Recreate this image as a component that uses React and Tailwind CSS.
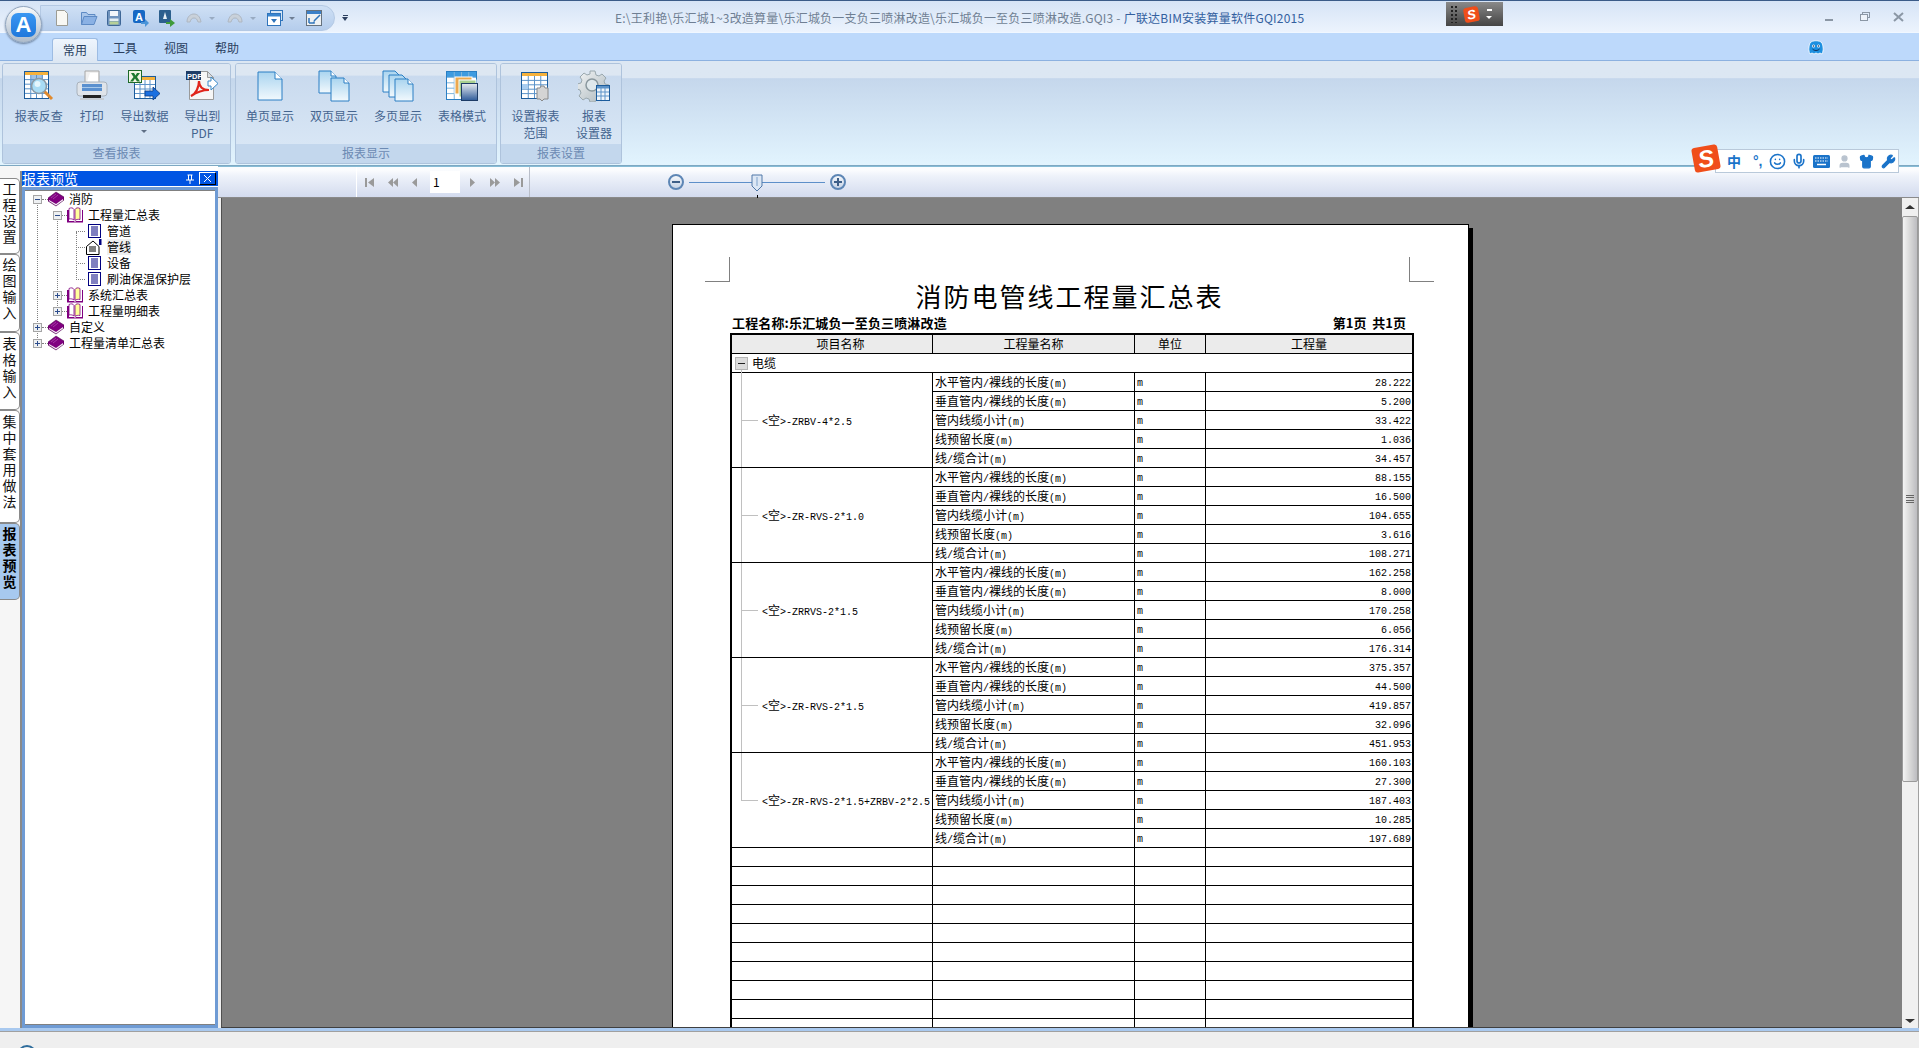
import React from "react";
import { Smile, Mic, Shirt, Wrench, User } from "lucide-react";

const reportGroups = [
  { name: "ZRBV-4*2.5", vals: ["28.222", "5.200", "33.422", "1.036", "34.457"] },
  { name: "ZR-RVS-2*1.0", vals: ["88.155", "16.500", "104.655", "3.616", "108.271"] },
  { name: "ZRRVS-2*1.5", vals: ["162.258", "8.000", "170.258", "6.056", "176.314"] },
  { name: "ZR-RVS-2*1.5", vals: ["375.357", "44.500", "419.857", "32.096", "451.953"] },
  { name: "ZR-RVS-2*1.5+ZRBV-2*2.5", vals: ["160.103", "27.300", "187.403", "10.285", "197.689"] },
];

const rowNames = ["水平管内/裸线的长度(m)", "垂直管内/裸线的长度(m)", "管内线缆小计(m)", "线预留长度(m)", "线/缆合计(m)"];

// CJK is 12px, latin is the 6px wide mono of the report
const Mixed = ({ text, className = "" }) => (
  <div className={`h-[18px] flex items-baseline whitespace-pre overflow-hidden ${className}`}>
    {text.split(/([\u4e00-\u9fff]+)/).filter(Boolean).map((part, i) =>
      /[\u4e00-\u9fff]/.test(part) ? (
        <span key={i} className="text-[12px] leading-[18px] [font-family:'Noto_Sans_CJK_SC',sans-serif]">{part}</span>
      ) : (
        <span key={i} className="text-[10px] leading-[22px] [font-family:'Liberation_Mono',monospace]">{part}</span>
      )
    )}
  </div>
);

const Defs = () => (
  <svg className="absolute w-0 h-0">
    <defs>
      <linearGradient id="sheet" x1="0" y1="0" x2="0" y2="1">
        <stop offset="0" stopColor="#a9d4ef" />
        <stop offset="1" stopColor="#f2f9fd" />
      </linearGradient>
      <linearGradient id="steel" x1="0" y1="0" x2="0" y2="1">
        <stop offset="0" stopColor="#e8ecf0" />
        <stop offset="1" stopColor="#2f5c9a" />
      </linearGradient>
      <linearGradient id="gearFill" x1="0" y1="0" x2="1" y2="1">
        <stop offset="0" stopColor="#f3f5f6" />
        <stop offset="1" stopColor="#a9b5ba" />
      </linearGradient>
    </defs>
  </svg>
);

const Sheet = ({ x, y, w, h, fold = 7 }) => (
  <path
    d={`M${x} ${y}h${w - fold}l${fold} ${fold}v${h - fold}h-${w}z`}
    fill="url(#sheet)"
    stroke="#2a7fc4"
    strokeWidth="1"
  />
);

const Grid = ({ x, y, w, h, cols, rows, stroke = "#5c93c9" }) => (
  <g stroke={stroke} strokeWidth="1">
    {[...Array(cols - 1)].map((_, i) => (
      <line key={i} x1={x + ((i + 1) * w) / cols} y1={y} x2={x + ((i + 1) * w) / cols} y2={y + h} />
    ))}
    {[...Array(rows - 1)].map((_, i) => (
      <line key={i} x1={x} y1={y + ((i + 1) * h) / rows} x2={x + w} y2={y + ((i + 1) * h) / rows} />
    ))}
  </g>
);

const IconReportCheck = () => (
  <svg width="32" height="32" viewBox="0 0 32 32">
    <rect x="1.500" y="1.500" width="24" height="27" fill="#fff" stroke="#1c5c9c" />
    <rect x="2" y="2" width="23" height="3" fill="#f5b13c" />
    <rect x="8" y="5" width="12" height="15" fill="#9fc1e3" />
    <Grid x={2} y={5} w={23} h={23} cols={4} rows={5} />
    <line x1="21" y1="21" x2="29" y2="29" stroke="#e08a2e" strokeWidth="3" />
    <circle cx="16" cy="16" r="7.500" fill="#a9dcf5" stroke="#8a9aa6" strokeWidth="1.600" />
    <circle cx="14.500" cy="14" r="3" fill="#e4f6fd" />
  </svg>
);

const IconPrinter = () => (
  <svg width="32" height="32" viewBox="0 0 32 32">
    <path d="M9 1h14v12H9z" fill="#f0f0f0" stroke="#a6a6a6" />
    <path d="M14 3h8v9h-11z" fill="#fff" />
    <rect x="1" y="12" width="30" height="14" rx="3" fill="#dfe4ea" stroke="#a9b2bc" />
    <rect x="6" y="14" width="20" height="7" fill="#5a90cf" />
    <rect x="6" y="17" width="20" height="1" fill="#a8c9ea" />
    <rect x="7" y="25" width="18" height="3" fill="#222" />
    <rect x="4" y="28" width="24" height="2" fill="#c6ccd3" />
  </svg>
);

const IconExcel = () => (
  <svg width="32" height="32" viewBox="0 0 32 32">
    <rect x="6.500" y="6.500" width="21" height="22" fill="#fff" stroke="#1c5c9c" />
    <rect x="7" y="7" width="20" height="3" fill="#f5b13c" />
    <Grid x={7} y={10} w={20} h={18} cols={4} rows={4} />
    <rect x="0.500" y="0.500" width="13" height="12" fill="#f2f6e4" stroke="#1e6a2a" />
    <path d="M3 3h3l1.500 2.500L9 3h3l-3 4 3 4.500H9L7 8.500 5 11.500H2L5.500 7z" fill="#1e7a30" />
    <path d="M17 21h8v-4l7 6.500-7 6.500v-4h-8z" fill="#1a6fe0" stroke="#0c3a80" strokeWidth="0.800" />
  </svg>
);

const IconPdf = () => (
  <svg width="32" height="32" viewBox="0 0 32 32">
    <path d="M3.500 1.500h18l6 6v22h-24z" fill="#f6f6f6" stroke="#9a9a9a" />
    <path d="M21.500 1.500v6h6z" fill="#d8dde2" stroke="#9a9a9a" />
    <rect x="0" y="1" width="15" height="9" fill="#1e3c66" />
    <text x="1" y="8.500" fontSize="7.500" fontWeight="700" fill="#fff" fontFamily="Liberation Sans">PDF</text>
    <path d="M5 26c5-2 8-9 8-15 0 5 3 9 10 9-6 0-12 2-18 6z" fill="none" stroke="#e0251b" strokeWidth="2.200" />
    <path d="M22 11h3V7l7 6.500-7 6.500v-4h-3z" fill="#fff" stroke="#3a8ac9" />
  </svg>
);

const IconSingle = () => (
  <svg width="32" height="32" viewBox="0 0 32 32">
    <Sheet x={4} y={2} w={24} h={28} fold={7} />
    <path d="M21 2v7h7" fill="#fff" stroke="#2a7fc4" />
  </svg>
);

const IconDouble = () => (
  <svg width="32" height="32" viewBox="0 0 32 32">
    <Sheet x={1} y={1} w={17} h={22} fold={5} />
    <path d="M13 1v5h5" fill="#fff" stroke="#2a7fc4" />
    <Sheet x={13} y={8} w={18} h={23} fold={5} />
    <path d="M26 8v5h5" fill="#fff" stroke="#2a7fc4" />
  </svg>
);

const IconMulti = () => (
  <svg width="32" height="32" viewBox="0 0 32 32">
    <Sheet x={1} y={1} w={16} h={21} fold={4} />
    <Sheet x={7} y={5} w={17} h={22} fold={4} />
    <Sheet x={13} y={9} w={18} h={22} fold={5} />
    <path d="M26 9v5h5" fill="#fff" stroke="#2a7fc4" />
  </svg>
);

const IconTableMode = () => (
  <svg width="32" height="32" viewBox="0 0 32 32">
    <rect x="0.500" y="1.500" width="30" height="28" fill="#fff" stroke="#2a7fc4" />
    <rect x="1" y="2" width="29" height="5" fill="#3e9be0" />
    <Grid x={1} y={2} w={29} h={27} cols={4} rows={5} stroke="#7fb5dd" />
    <rect x="9" y="7" width="17" height="17" fill="#eba94f" stroke="#fff" />
    <rect x="13" y="10" width="17" height="17" fill="#a8cf8f" stroke="#fff" />
    <rect x="15.500" y="13.500" width="16" height="17" fill="url(#steel)" stroke="#1e3c66" />
  </svg>
);

const IconSetup = () => (
  <svg width="32" height="32" viewBox="0 0 32 32">
    <rect x="1.500" y="2.500" width="26" height="26" fill="#fff" stroke="#1c5c9c" />
    <rect x="2" y="3" width="25" height="3" fill="#f5b13c" />
    <Grid x={2} y={6} w={25} h={22} cols={4} rows={5} />
    <rect x="2" y="14" width="6" height="5" fill="#a9cdf0" />
    <path d="M17 18h3l1-2h3l1 2h3v11h-4l-2 2-2-2h-3z" fill="#d4d4d4" stroke="#8a8a8a" />
  </svg>
);

const IconGearTable = () => (
  <svg width="32" height="32" viewBox="0 0 32 32">
    <path
      d="M12 1h5l1 4 3 1 3-2 4 4-2 3 1 3 4 1v5l-4 1-1 3 2 3-4 4-3-2-3 1-1 2h-5l-1-3-3-1-3 2-4-4 2-3-1-3-3-1v-5l4-1 1-3-2-3 4-4 3 2 3-1z"
      fill="url(#gearFill)"
      stroke="#9aa8ae"
    />
    <circle cx="14" cy="15" r="6" fill="#dfe8ec" stroke="#8a989e" strokeWidth="1.500" />
    <rect x="18.500" y="15.500" width="13" height="15" fill="#eef5fb" stroke="#1c5c9c" />
    <rect x="19" y="16" width="12" height="2.500" fill="#5c93c9" />
    <Grid x={19} y={18} w={12} h={12} cols={3} rows={3} />
  </svg>
);

const ribbonGroups = [
  {
    label: "查看报表",
    width: "w-[229px]",
    pad: "pl-[6px]",
    buttons: [
      { icon: <IconReportCheck />, lines: ["报表反查"], w: "w-[60px]" },
      { icon: <IconPrinter />, lines: ["打印"], w: "w-[46px]" },
      { icon: <IconExcel />, lines: ["导出数据"], w: "w-[60px]", arrow: true },
      { icon: <IconPdf />, lines: ["导出到", "PDF"], w: "w-[56px]" },
    ],
  },
  {
    label: "报表显示",
    width: "w-[262px] ml-[1px]",
    pad: "pl-[2px]",
    buttons: [
      { icon: <IconSingle />, lines: ["单页显示"], w: "w-[64px]" },
      { icon: <IconDouble />, lines: ["双页显示"], w: "w-[64px]" },
      { icon: <IconMulti />, lines: ["多页显示"], w: "w-[64px]" },
      { icon: <IconTableMode />, lines: ["表格模式"], w: "w-[64px]" },
    ],
  },
  {
    label: "报表设置",
    width: "w-[122px]",
    pad: "pl-0",
    buttons: [
      { icon: <IconSetup />, lines: ["设置报表", "范围"], w: "w-[69px]" },
      { icon: <IconGearTable />, lines: ["报表", "设置器"], w: "w-[48px]" },
    ],
  },
];

const RibbonGroup = ({ group }) => (
  <div className={`${group.width} h-[101px] flex flex-col rounded-[3px] border border-[#aec3dc] overflow-hidden`}>
    <div className={`h-[80px] flex ${group.pad} bg-gradient-to-b from-[#dde7f2] from-[14%] via-[#c9daee] via-[15%] to-[#d8e6f5]`}>
      {group.buttons.map((b) => (
        <div key={b.lines[0]} className={`${b.w} flex flex-col items-center pt-[6px]`}>
          {b.icon}
          <div className="mt-[5px] text-[12px] leading-[17px] text-[#44648f] text-center whitespace-nowrap">
            {b.lines.map((l) => (
              <div key={l}>{l}</div>
            ))}
            {b.arrow && <div className="mx-auto mt-[6px] w-0 h-0 border-x-[3px] border-x-transparent border-t-[3px] border-t-[#5f6f85]" />}
          </div>
        </div>
      ))}
    </div>
    <div className="flex-1 bg-[#c3d7ed] text-[12px] leading-[18px] text-center text-[#6c8ab3]">{group.label}</div>
  </div>
);

const QatDoc = () => (
  <svg width="18" height="18" viewBox="0 0 18 18"><path d="M3.500 1.500h8l3 3v12h-11z" fill="#f8f8f4" stroke="#9c9c94" /></svg>
);
const QatFolder = () => (
  <svg width="18" height="18" viewBox="0 0 18 18"><path d="M1.500 15.500v-12h5l1.500 2h7v2" fill="#a9c6ea" stroke="#5d8ac4" /><path d="M1.500 15.500l2.500-8h13l-3 8z" fill="#8ab1e4" stroke="#5d8ac4" /></svg>
);
const QatSave = () => (
  <svg width="18" height="18" viewBox="0 0 18 18"><rect x="2.500" y="1.500" width="13" height="15" rx="1" fill="#6f93bd" stroke="#3e6797" /><rect x="5" y="2" width="8" height="5" fill="#f2f6fa" /><rect x="4.500" y="9.500" width="9" height="2.500" fill="#e4eef3" /><rect x="4.500" y="12.500" width="9" height="3" fill="#b6d098" /></svg>
);
const QatExport = () => (
  <svg width="18" height="18" viewBox="0 0 18 18"><rect x="1" y="1" width="12" height="13" rx="2" fill="#1668c4" /><text x="3" y="11.500" fontSize="11" fontWeight="700" fill="#fff" fontFamily="Liberation Sans">A</text><path d="M9 13h4v-3l4 4-4 4v-3H9z" fill="#4a94d8" /></svg>
);
const QatBook = () => (
  <svg width="18" height="18" viewBox="0 0 18 18"><rect x="1" y="1" width="12" height="13" rx="1" fill="#2c5f8e" /><path d="M7 3l2 7H5z" fill="#e8f1f6" /><path d="M8 13h4v-3l5 4-5 4v-3H8z" fill="#3f9a3a" /></svg>
);
const QatUndo = ({ flip }) => (
  <svg width="18" height="18" viewBox="0 0 18 18" className={flip ? "-scale-x-100" : ""}><path d="M2 13c0-6 4-8 7-8s6 2 7 8h-3c-1-3-2-4-4-4s-3 1-4 4z" fill="#c9d1da" stroke="#aeb7c2" /></svg>
);
const QatWindow = () => (
  <svg width="18" height="18" viewBox="0 0 18 18"><rect x="4.500" y="1.500" width="12" height="10" fill="#d5e5f5" stroke="#2f74bb" /><rect x="1.500" y="4.500" width="13" height="12" fill="#fff" stroke="#2f74bb" /><rect x="2" y="5" width="12" height="2.500" fill="#3a86d0" /><path d="M5 10h6l-3 4z" fill="#2f74bb" /></svg>
);
const QatExit = () => (
  <svg width="18" height="18" viewBox="0 0 18 18"><rect x="1.500" y="1.500" width="15" height="15" fill="#eef1f3" stroke="#66727e" /><rect x="2" y="2" width="14" height="3" fill="#3b80c8" /><path d="M15 6l-6 6M4 14h5v-1.500M4 14V9" stroke="#2f74bb" strokeWidth="1.500" fill="none" /></svg>
);

const SmallArrow = ({ className }) => (
  <div className={`w-[8px] flex justify-center ${className}`}>
    <div className="w-0 h-0 border-x-[3px] border-x-transparent border-t-[3px] border-t-[#6f7f94]" />
  </div>
);

const ClosedBook = () => (
  <svg width="16" height="16" viewBox="0 0 16 16">
    <path d="M0 7l8-6 8 5v3l-8 6-8-5z" fill="#800080" stroke="#400040" strokeWidth="0.500" />
    <path d="M1 9l7 4 7-5v1.500l-7 5-7-4.500z" fill="#f4f4f4" />
    <path d="M3 7l5-4M5 8l5-4" stroke="#c060c0" strokeWidth="0.600" />
  </svg>
);

const OpenBook = () => (
  <svg width="16" height="16" viewBox="0 0 16 16">
    <path d="M0 3h2v11h5l1 1 1-1h6V3h1v12.500H0z" fill="#800080" />
    <path d="M2 1.500c2-1 4-1 5 1v10.500c-1-1-3-1.500-5-1z" fill="#fff" stroke="#800080" strokeWidth="0.800" />
    <path d="M8 2.500c1-2 3-2 5-1v11c-2-.5-4 0-5 1z" fill="#ffff9a" stroke="#800080" strokeWidth="0.800" />
  </svg>
);

const ListDoc = () => (
  <svg width="13" height="14" viewBox="0 0 13 14">
    <rect x="0.500" y="0.500" width="12" height="13" fill="#fff" stroke="#000080" />
    <path d="M3 3h7M3 5h7M3 7h7M3 9h7M3 11h7" stroke="#000080" strokeWidth="1" />
  </svg>
);

const SelectedDoc = () => (
  <svg width="16" height="16" viewBox="0 0 16 16">
    <path d="M0.500 7.500L7 2l6 5.500v8h-12.500z" fill="#fff" stroke="#000" />
    <path d="M3 8h7M3 10h7M3 12h7" stroke="#000" />
    <rect x="13" y="0" width="2.500" height="6" fill="#000080" />
  </svg>
);

const Expander = ({ open, className = "" }) => (
  <div className={`w-[9px] h-[9px] shrink-0 relative border border-[#a5a5a5] bg-[#eef0f2] ${className}`}>
    <div className="absolute left-[1px] top-[3px] w-[5px] h-px bg-[#2c4c8c]" />
    {!open && <div className="absolute left-[3px] top-[1px] w-px h-[5px] bg-[#2c4c8c]" />}
  </div>
);

const TreeRow = ({ level, open, icon, text, active }) => {
  const pad = level === 0 ? "pl-[8px]" : level === 1 ? "pl-[28px]" : "pl-[61px]";
  return (
    <div className={`h-[16px] flex items-center relative ${pad}`}>
      {level === 0 && <div className="absolute left-[17px] top-[8px] w-[6px] border-t border-dotted border-[#808080]" />}
      {level === 1 && <div className="absolute left-[37px] top-[8px] w-[5px] border-t border-dotted border-[#808080]" />}
      {level === 2 && <div className="absolute left-[51px] top-[8px] w-[9px] border-t border-dotted border-[#808080]" />}
      {level < 2 && <Expander open={open} className="z-10" />}
      <div className={`w-[16px] flex justify-center ${level === 0 ? "ml-[6px]" : level === 1 ? "ml-[5px]" : ""}`}>{icon}</div>
      <div className={`ml-[5px] text-[12px] leading-[16px] text-black whitespace-nowrap ${active ? "bg-[#efefef]" : ""}`}>{text}</div>
    </div>
  );
};

// upright vertical text, so the characters flow as one string
const LeftTab = ({ text, h, pt, active }) => (
  <div
    className={`${h} ${pt} w-[20px] flex justify-center border-y border-r border-[#8a8a8a] rounded-tr-[5px] rounded-br-[5px] text-[14px] leading-[18px] tracking-[2px] ${
      active ? "bg-[#a7c9ef] font-bold text-black" : "bg-white text-[#111]"
    }`}
  >
    <span className="[writing-mode:vertical-rl] [text-orientation:upright]">{text}</span>
  </div>
);

const NavTri = ({ dir, bar, double, className }) => (
  <svg width="12" height="12" viewBox="0 0 12 12" className={`${className} ${dir === "right" ? "-scale-x-100" : ""}`}>
    {bar && <rect x="1" y="2" width="2" height="9" fill="#9a9a9a" />}
    {double ? (
      <>
        <path d="M6 2v9L1 6.500z" fill="#9a9a9a" />
        <path d="M11 2v9L6 6.500z" fill="#9a9a9a" />
      </>
    ) : (
      <path d={bar ? "M10 2v9L4 6.500z" : "M8 2v9L3 6.500z"} fill="#9a9a9a" />
    )}
  </svg>
);

const ZoomBtn = ({ plus }) => (
  <div className="w-[16px] h-[16px] rounded-full border-2 border-[#5d86b5] bg-gradient-to-b from-[#f4f7fb] to-[#c8d4e6] flex items-center justify-center relative shrink-0">
    <div className="w-[8px] h-[2px] bg-[#3e5f88]" />
    {plus && <div className="absolute w-[2px] h-[8px] bg-[#3e5f88]" />}
  </div>
);

const Toolbar = () => (
  <div className="h-[32px] flex bg-gradient-to-b from-[#fbfcfe] from-[10%] via-[#eef2fa] via-[30%] to-[#d3dbee] border-t border-[#86bcd6] border-b border-b-[#8a8a8a] shrink-0">
    <div className="ml-[138px] w-[174px] h-full border-l border-r border-l-white border-r-[#b9bec9] flex items-center">
      <NavTri bar className="ml-[7px]" />
      <NavTri double className="ml-[11px]" />
      <NavTri className="ml-[10px]" />
      <div className="ml-[9px] w-[30px] h-[22px] bg-white text-[12px] leading-[22px] pl-[3px] text-black">1</div>
      <NavTri dir="right" className="ml-[6px]" />
      <NavTri dir="right" double className="ml-[11px]" />
      <NavTri dir="right" bar className="ml-[11px]" />
    </div>
    <div className="ml-[138px] flex items-center gap-[5px]">
      <ZoomBtn />
      <div className="w-[136px] h-px bg-[#5d8fc9] relative">
        <svg width="12" height="18" viewBox="0 0 12 18" className="absolute left-[62px] -top-[8px]">
          <path d="M1 1h10v11l-5 5-5-5z" fill="#dce7f5" stroke="#5078a8" />
          <path d="M6 3v9" stroke="#7fa3cc" />
        </svg>
        <div className="absolute left-[68px] top-[13px] w-px h-[3px] bg-black" />
      </div>
      <ZoomBtn plus />
    </div>
  </div>
);

const Scrollbar = () => (
  <div className="w-[17px] shrink-0 bg-[#f0f0f0] flex flex-col items-center border-r border-[#a0a0a0]">
    <div className="h-[18px] flex items-center justify-center">
      <div className="w-0 h-0 border-x-[5px] border-x-transparent border-b-[4px] border-b-[#333]" />
    </div>
    <div className="w-[16px] h-[566px] rounded-[2px] border border-[#9a9a9a] bg-gradient-to-r from-[#f4f4f4] via-[#d8d8d8] to-[#bcbcc0] flex items-center justify-center">
      <div className="w-[8px] h-[9px] flex flex-col justify-between">
        {[...Array(4)].map((_, i) => (
          <div key={i} className="h-px bg-[#666]" />
        ))}
      </div>
    </div>
    <div className="mt-auto h-[14px] flex items-center justify-center">
      <div className="w-0 h-0 border-x-[5px] border-x-transparent border-t-[4px] border-t-[#333]" />
    </div>
  </div>
);

const cellLine = "border-b border-r border-black p-0";

const ReportTable = () => (
  <div className="ml-[57px] w-[684px] border-2 border-b-0 border-black">
    <table className="table-fixed w-[680px] border-separate border-spacing-0 text-black">
      <colgroup>
        <col className="w-[201px]" />
        <col className="w-[202px]" />
        <col className="w-[71px]" />
        <col className="w-[206px]" />
      </colgroup>
      <tbody>
        <tr className="h-[19px] bg-[#ebebeb]">
          <td className={cellLine}><Mixed text="项目名称" className="justify-center pl-[17px]" /></td>
          <td className={cellLine}><Mixed text="工程量名称" className="justify-center" /></td>
          <td className={cellLine}><Mixed text="单位" className="justify-center" /></td>
          <td className="border-b border-black p-0"><Mixed text="工程量" className="justify-center" /></td>
        </tr>
        <tr className="h-[19px]">
          <td colSpan={4} className="border-b border-black p-0">
            <div className="flex items-center h-[18px] relative">
              <div className="ml-[3px] w-[13px] h-[13px] border border-[#b5b5b5] bg-[#dcdcdc] flex items-center justify-center">
                <div className="w-[7px] h-px bg-[#222]" />
              </div>
              <div className="ml-[4px]"><Mixed text="电缆" /></div>
              <div className="absolute left-[9px] top-[16px] w-px h-[3px] bg-[#c0c0c0]" />
            </div>
          </td>
        </tr>
        {reportGroups.map((g, gi) =>
          g.vals.map((v, i) => (
            <tr key={`${gi}-${i}`} className="h-[19px]">
              {i === 0 && (
                <td rowSpan={5} className={`${cellLine} relative`}>
                  <div className={`absolute left-[9px] top-0 w-px bg-[#c0c0c0] ${gi === reportGroups.length - 1 ? "h-1/2" : "h-full"}`} />
                  <div className="absolute left-[9px] top-1/2 w-[17px] h-px bg-[#c0c0c0]" />
                  <Mixed text={`<空>-${g.name}`} className="pl-[30px]" />
                </td>
              )}
              <td className={`${cellLine} pl-[2px]`}><Mixed text={rowNames[i]} /></td>
              <td className={`${cellLine} pl-[2px]`}><Mixed text="m" /></td>
              <td className="border-b border-black p-0 pr-[1px]"><Mixed text={v} className="justify-end" /></td>
            </tr>
          ))
        )}
        {[...Array(10)].map((_, i) => (
          <tr key={i} className="h-[19px]">
            <td className={cellLine}></td>
            <td className={cellLine}></td>
            <td className={cellLine}></td>
            <td className="border-b border-black p-0"></td>
          </tr>
        ))}
      </tbody>
    </table>
  </div>
);

const ReportPage = () => (
  <div className="ml-[450px] mt-[26px] w-[797px] h-[900px] bg-white border border-black shadow-[4px_4px_0_#000] relative pt-[57px]">
    <div className="absolute left-[32px] top-[32px] w-[25px] h-[25px] border-r border-b border-[#808080]" />
    <div className="absolute left-[736px] top-[32px] w-[25px] h-[25px] border-l border-b border-[#808080]" />
    <div className="w-[793px] h-[32px] text-center text-[26px] leading-[28px] tracking-[2px] text-black">消防电管线工程量汇总表</div>
    <div className="ml-[59px] w-[674px] h-[19px] flex justify-between text-[13px] leading-[17px] font-bold text-black">
      <span className="tracking-[0.15px]">工程名称:乐汇城负一至负三喷淋改造</span>
      <span className="whitespace-pre">第1页  共1页</span>
    </div>
    <ReportTable />
  </div>
);

const SogouBadge = ({ size }) => (
  <div className={`${size} rounded-[3px] bg-[#f04e1a] -rotate-[10deg] flex items-center justify-center text-white font-bold italic [font-family:'Liberation_Sans',sans-serif]`}>S</div>
);

export default function App() {
  return (
    <div className="w-[1919px] h-[1048px] relative overflow-hidden flex flex-col bg-[#f0f0f0] [font-family:'Noto_Sans_CJK_SC',sans-serif]">
      <Defs />

      {/* title bar */}
      <div className="h-[33px] shrink-0 flex border-t border-[#3b5b88] bg-gradient-to-b from-[#d6e4f6] to-[#ecf3fd] border-b border-b-[#f0f7ff]">
        <div className="ml-[40px] mt-[4px] w-[295px] h-[26px] rounded-r-[13px] bg-gradient-to-b from-[#cfe0f5] to-[#b5cdec] border border-[#b4c9e4] flex items-center">
          <div className="ml-[12px] w-[18px]"><QatDoc /></div>
          <div className="ml-[9px] w-[18px]"><QatFolder /></div>
          <div className="ml-[7px] w-[18px]"><QatSave /></div>
          <div className="ml-[9px] w-[18px]"><QatExport /></div>
          <div className="ml-[8px] w-[18px]"><QatBook /></div>
          <div className="ml-[9px] w-[18px]"><QatUndo /></div>
          <SmallArrow className="ml-[5px] opacity-50" />
          <div className="ml-[10px] w-[18px]"><QatUndo flip /></div>
          <SmallArrow className="ml-[5px] opacity-50" />
          <div className="ml-[9px] w-[18px]"><QatWindow /></div>
          <SmallArrow className="ml-[4px]" />
          <div className="ml-[9px] w-[18px]"><QatExit /></div>
        </div>
        <div className="ml-[7px] mt-[14px] flex flex-col items-center gap-px">
          <div className="w-[5px] h-px bg-[#2c3f5f]" />
          <div className="w-0 h-0 border-x-[3px] border-x-transparent border-t-[4px] border-t-[#2c3f5f]" />
        </div>
        <div className="ml-[267px] text-[12px] leading-[33px] tracking-[0.22px] whitespace-nowrap text-[#6f7f93]">
          E:\王利艳\乐汇城1~3改造算量\乐汇城负一支负三喷淋改造\乐汇城负一至负三喷淋改造.GQI3 - <span className="text-[#33609f]">广联达BIM安装算量软件GQI2015</span>
        </div>
        <div className="ml-auto flex items-center h-full text-[#7f8c9b]">
          <div className="w-[8px] h-[2px] bg-[#8b97a5] mt-[6px]" />
          <svg width="10" height="9" viewBox="0 0 10 9" className="ml-[27px]">
            <rect x="2.500" y="0.500" width="7" height="5" fill="none" stroke="#8b97a5" />
            <rect x="0.500" y="2.500" width="7" height="6" fill="#eef3fa" stroke="#8b97a5" />
          </svg>
          <svg width="11" height="10" viewBox="0 0 11 10" className="ml-[23px] mr-[15px]">
            <path d="M1 1l9 8M10 1L1 9" stroke="#8b97a5" strokeWidth="2" />
          </svg>
        </div>
      </div>

      {/* tabs */}
      <div className="h-[27px] shrink-0 flex items-end bg-[#bdd9fb] pl-[52px] text-[12px] text-[#2a3f5f]">
        <div className="w-[46px] h-[23px] -mb-px z-10 rounded-t-[3px] border border-b-0 border-[#9dbce3] bg-gradient-to-b from-[#eef5fd] to-[#dde7f3] text-center leading-[21px]">常用</div>
        <div className="w-[54px] h-[23px] text-center leading-[21px]">工具</div>
        <div className="w-[48px] h-[23px] text-center leading-[21px]">视图</div>
        <div className="w-[54px] h-[23px] text-center leading-[21px]">帮助</div>
        <svg width="16" height="16" viewBox="0 0 16 16" className="ml-auto mr-[95px] mb-[4px]">
          <path d="M2 3c2-3 10-3 12 0 1 3 2 7 0 11l-2-1-2 1-2-1-2 1-2-1-2 1C0 10 1 6 2 3z" fill="#1c8fe0" stroke="#fff" strokeWidth="0.800" />
          <circle cx="5.500" cy="6" r="1.500" fill="#fff" />
          <circle cx="10.500" cy="6" r="1.500" fill="#fff" />
          <circle cx="5.500" cy="6" r="0.800" fill="#10305a" />
          <circle cx="10.500" cy="6" r="0.800" fill="#10305a" />
          <path d="M4.500 9c2 2 5 2 7 0" stroke="#10305a" fill="none" />
        </svg>
      </div>

      {/* ribbon */}
      <div className="h-[106px] shrink-0 flex gap-[3px] pl-[2px] pt-[2px] border-t border-[#8cb1e0] border-b border-b-[#7ea8c2] bg-gradient-to-b from-[#dce7f3] from-[16%] via-[#c5d7ec] via-[17%] to-[#e2f4fe]">
        {ribbonGroups.map((g) => (
          <RibbonGroup key={g.label} group={g} />
        ))}
      </div>

      {/* main */}
      <div className="h-[862px] shrink-0 flex">
        <div className="w-[20px] shrink-0 pt-[12px] flex flex-col bg-[#f6f6f6]">
          <LeftTab text="工程设置" h="h-[76px]" pt="pt-[3px]" />
          <LeftTab text="绘图输入" h="h-[78px]" pt="pt-[3px]" />
          <LeftTab text="表格输入" h="h-[78px]" pt="pt-[4px]" />
          <LeftTab text="集中套用做法" h="h-[113px]" pt="pt-[4px]" />
          <LeftTab text="报表预览" h="h-[77px]" pt="pt-[3px]" active />
        </div>

        <div className="w-[198px] shrink-0 flex flex-col bg-white">
          <div className="h-[5px] shrink-0" />
          <div className="flex-1 min-h-0 flex flex-col bg-[#6f9bd4] border-l-2 border-[#8a8a8a]">
            <div className="h-[15px] shrink-0 bg-[#0054e3] text-white text-[14px] leading-[15px] flex items-center">
              <span>报表预览</span>
              <svg width="8" height="10" viewBox="0 0 8 10" className="ml-auto">
                <path d="M1.500 1h5M2.500 1v5M5.500 1v5M0 6h8M4 6v4" stroke="#fff" fill="none" />
              </svg>
              <div className="ml-[5px] mr-[2px] w-[17px] h-[13px] border border-white border-r-black border-b-black flex items-center justify-center">
                <svg width="9" height="9" viewBox="0 0 9 9"><path d="M1 1l7 7M8 1L1 8" stroke="#fff" /></svg>
              </div>
            </div>
            <div className="h-px shrink-0 bg-white" />
            <div className="flex-1 min-h-0 mx-[3px] mt-[3px] mb-[3px] bg-white border-t border-b border-[#808080] relative">
              <div className="absolute left-[12px] top-[9px] h-[144px] border-l border-dotted border-[#808080]" />
              <div className="absolute left-[32px] top-[25px] h-[96px] border-l border-dotted border-[#808080]" />
              <div className="absolute left-[51px] top-[41px] h-[48px] border-l border-dotted border-[#808080]" />
              <TreeRow level={0} open icon={<ClosedBook />} text="消防" />
              <TreeRow level={1} open icon={<OpenBook />} text="工程量汇总表" />
              <TreeRow level={2} icon={<ListDoc />} text="管道" />
              <TreeRow level={2} icon={<SelectedDoc />} text="管线" active />
              <TreeRow level={2} icon={<ListDoc />} text="设备" />
              <TreeRow level={2} icon={<ListDoc />} text="刷油保温保护层" />
              <TreeRow level={1} icon={<OpenBook />} text="系统汇总表" />
              <TreeRow level={1} icon={<OpenBook />} text="工程量明细表" />
              <TreeRow level={0} icon={<ClosedBook />} text="自定义" />
              <TreeRow level={0} icon={<ClosedBook />} text="工程量清单汇总表" />
            </div>
          </div>
        </div>

        <div className="flex-1 min-w-0 flex flex-col">
          <Toolbar />
          <div className="flex-1 min-h-0 flex pl-[3px] bg-[#f0f0f0]">
            <div className="flex-1 min-w-0 bg-[#808080] border-l border-[#505050] border-b border-b-[#404040] overflow-hidden">
              <ReportPage />
            </div>
            <Scrollbar />
          </div>
        </div>
      </div>

      <div className="h-[3px] shrink-0 bg-[#a9c9ef]" />
      <div className="h-px shrink-0 bg-[#a0a0a0]" />
      <div className="flex-1 bg-[#efefef] relative overflow-hidden">
        <div className="absolute left-[17px] top-[13px] w-[20px] h-[20px] rounded-full border-2 border-[#2f6d9c]" />
      </div>

      {/* application button */}
      <div className="absolute left-[5px] top-[6px] w-[37px] h-[37px] rounded-full bg-gradient-to-b from-[#f8fafc] to-[#aebccb] border border-[#90a4bd] shadow-[0_1px_2px_#6a7f9a] flex items-center justify-center">
        <div className="w-[25px] h-[24px] rounded-[7px] bg-gradient-to-b from-[#3a97f2] to-[#1f78dc] text-white text-[22px] leading-[24px] font-bold text-center [font-family:'Liberation_Sans',sans-serif]">A</div>
      </div>

      {/* floating sogou widgets */}
      <div className="absolute left-[1446px] top-[2px] w-[57px] h-[24px] bg-gradient-to-b from-[#8a8a8a] to-[#454545] flex items-center">
        <div className="ml-[4px] w-[8px] h-[18px] bg-[radial-gradient(#222_1px,transparent_1px)] bg-[length:4px_4px]" />
        <SogouBadge size="ml-[6px] w-[15px] h-[15px] text-[13px]" />
        <div className="ml-[7px] flex flex-col items-center gap-[5px]">
          <div className="w-[5px] h-[2px] bg-white" />
          <div className="w-0 h-0 border-x-[3px] border-x-transparent border-t-[3px] border-t-white" />
        </div>
      </div>
      <div className="absolute left-[1715px] top-[149px] w-[184px] h-[24px] bg-white border border-[#b9c9da] flex items-center text-[#1a73c9]">
        <span className="ml-[11px] text-[14px] font-bold">中</span>
        <span className="ml-[12px] text-[14px] font-bold leading-none [font-family:'Liberation_Sans',sans-serif]">°,</span>
        <Smile size={17} strokeWidth={2.200} className="ml-[6px]" />
        <Mic size={16} strokeWidth={2.500} className="ml-[5px]" />
        <svg width="17" height="13" viewBox="0 0 17 13" className="ml-[6px]">
          <rect width="17" height="13" rx="1.500" fill="currentColor" />
          <path d="M2 3h13M2 6h13" stroke="#fff" strokeDasharray="1.500 1" />
          <path d="M4 9.500h9" stroke="#fff" strokeWidth="1.500" />
        </svg>
        <User size={15} fill="currentColor" className="ml-[7px] text-[#b9c3cf]" />
        <Shirt size={15} fill="currentColor" className="ml-[7px]" />
        <Wrench size={15} fill="currentColor" className="ml-[7px]" />
      </div>
      <div className="absolute left-[1693px] top-[146px]">
        <SogouBadge size="w-[26px] h-[25px] text-[24px]" />
      </div>
    </div>
  );
}
